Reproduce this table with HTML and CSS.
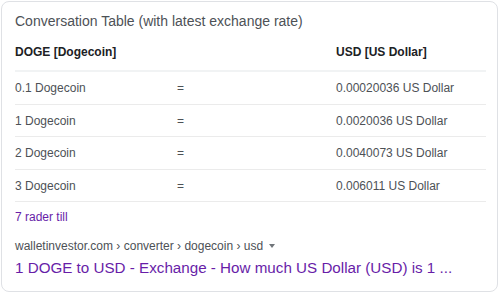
FILE: index.html
```html
<!DOCTYPE html>
<html>
<head>
<meta charset="utf-8">
<link rel="stylesheet" href="styles.css">
</head>
<body>
<div class="card">
  <div class="title">Conversation Table (with latest exchange rate)</div>
  <table class="conv">
    <tr class="head"><th class="c1">DOGE [Dogecoin]</th><th class="c2"></th><th class="c3">USD [US Dollar]</th></tr>
    <tr><td class="c1">0.1 Dogecoin</td><td class="c2">=</td><td class="c3">0.00020036 US Dollar</td></tr>
    <tr><td class="c1">1 Dogecoin</td><td class="c2">=</td><td class="c3">0.0020036 US Dollar</td></tr>
    <tr><td class="c1">2 Dogecoin</td><td class="c2">=</td><td class="c3">0.0040073 US Dollar</td></tr>
    <tr><td class="c1">3 Dogecoin</td><td class="c2">=</td><td class="c3">0.006011 US Dollar</td></tr>
  </table>
  <div class="more">7 rader till</div>
  <div class="cite">walletinvestor.com › converter › dogecoin › usd <span class="arrow"></span></div>
  <div class="link">1 DOGE to USD - Exchange - How much US Dollar (USD) is 1 ...</div>
</div>
</body>
</html>
```
FILE: styles.css
```css
html, body { margin: 0; padding: 0; background: #fff; }
body { font-family: "Liberation Sans", Arial, sans-serif; }
.card {
  width: 497px;
  height: 291px;
  margin: 1px 0 0 1px;
  border: 1px solid #dfe1e5;
  border-radius: 8px;
  box-sizing: border-box;
  padding: 10px 11px 0 13px;
}
.title { font-size: 14px; color: #4d5156; line-height: 18px; }
.conv { width: 100%; border-collapse: collapse; margin-top: 15px; font-size: 12px; }
.conv th { text-align: left; font-weight: bold; color: #202124; height: 25px; padding: 0; vertical-align: top; border-bottom: 2px solid #f1f3f4; }
.conv td { color: #4d5156; height: 30.5px; padding: 1px 0 0; border-bottom: 1px solid #ebebeb; vertical-align: middle; }
.c1 { width: 162px; }
.c2 { width: 159px; }
.more { font-size: 12px; color: #681da8; margin-top: 8px; line-height: 15px; }
.cite { font-size: 12px; color: #4d5156; margin-top: 13px; line-height: 16px; }
.arrow { display: inline-block; width: 0; height: 0; border-left: 3px solid transparent; border-right: 3px solid transparent; border-top: 4px solid #70757a; margin-left: 3px; vertical-align: 2px; }
.link { font-size: 15.2px; color: #681da8; line-height: 20px; margin-top: 4px; }
```
